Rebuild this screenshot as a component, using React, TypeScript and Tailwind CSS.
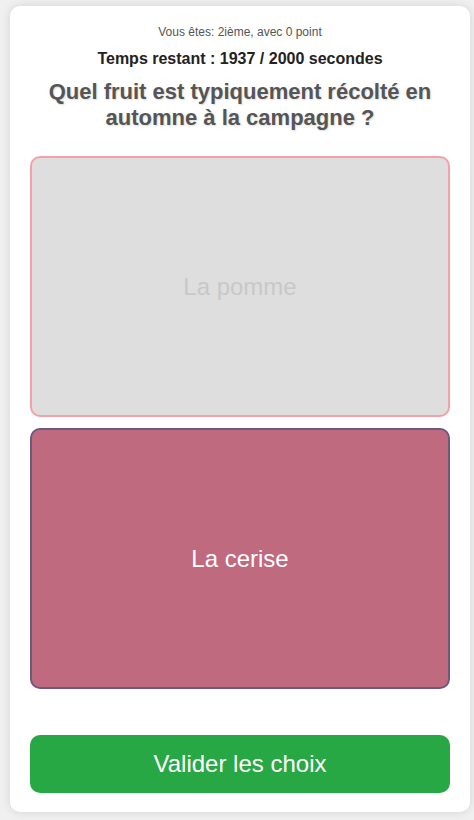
export default function App() {
  return (
    <div className="min-h-[820px] bg-[#f0f0f0] pt-[6px] pb-[8px] pl-[10px] pr-[4px] font-['Liberation_Sans',Arial,sans-serif]">
      <div className="bg-white rounded-[10px] shadow-[0_0_10px_rgba(0,0,0,0.12)] px-[20px] pt-[19px] pb-[19px] flex flex-col">
        <p className="text-center text-[12px] leading-[14px] text-[#555]">Vous êtes: 2ième, avec 0 point</p>
        <p className="text-center text-[16px] leading-[18px] font-bold text-[#222] mt-[11px]">Temps restant : 1937 / 2000 secondes</p>
        <h1 className="text-center text-[22px] leading-[26px] font-bold text-[#555] mt-[11px] px-[10px] [text-shadow:1px_1px_2px_rgba(0,0,0,0.15)]">
          Quel fruit est typiquement récolté en automne à la campagne ?
        </h1>
        <div className="mt-[25px] flex flex-col gap-[11px]">
          <div className="h-[261px] rounded-[10px] border-2 border-[#f5a0a8] bg-[#dedede] flex items-center justify-center text-[24px] text-[#c8c8c8]">
            La pomme
          </div>
          <div className="h-[261px] rounded-[10px] border-2 border-[#6b5a7e] bg-[#c06a80] flex items-center justify-center text-[24px] text-white">
            La cerise
          </div>
        </div>
        <button className="mt-[46px] h-[58px] rounded-[10px] bg-[#28a745] text-white text-[24px]">Valider les choix</button>
      </div>
    </div>
  );
}
